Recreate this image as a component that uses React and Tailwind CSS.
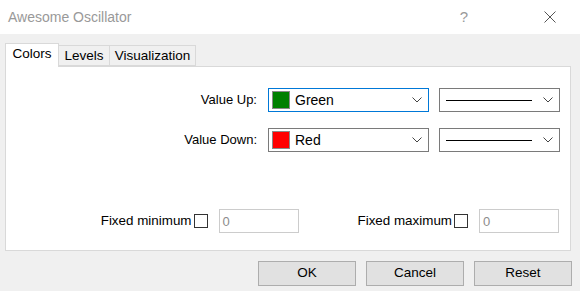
import React, { useState } from "react";

const Chevron = () => (
  <svg width="10" height="6" viewBox="0 0 10 6" className="shrink-0">
    <path d="M0.5 0.5 L5 5 L9.5 0.5" fill="none" stroke="#444" strokeWidth="1" />
  </svg>
);

const ColorSelect = ({ color, label, focused }) => (
  <div
    className={`flex items-center w-[161px] h-[24px] bg-white border pl-[3px] pr-[6px] ${
      focused ? "border-[#0078d7]" : "border-[#7a7a7a]"
    }`}
  >
    <div className="w-[18px] h-[18px] border border-[#8a8a8a]" style={{ background: color }} />
    <span className="ml-[5px] flex-1 text-[14px] text-black">{label}</span>
    <Chevron />
  </div>
);

const LineSelect = () => (
  <div className="flex items-center w-[121px] h-[24px] bg-white border border-[#7a7a7a] pl-[6px] pr-[6px]">
    <div className="w-[86px] h-px bg-black" />
    <div className="flex-1" />
    <Chevron />
  </div>
);

const FixedField = ({ label }) => {
  const [checked, setChecked] = useState(false);
  return (
    <div className="flex items-center">
      <span className="text-black text-[13.4px]">{label}</span>
      <button
        onClick={() => setChecked(!checked)}
        className="ml-[2px] w-[14px] h-[14px] border border-[#333] bg-white"
      />
      <div className="ml-[11px] w-[80px] h-[24px] border border-[#cccccc] bg-white pl-[3px] flex items-start pt-[2px] text-[#8c8c8c]">
        0
      </div>
    </div>
  );
};

const App = () => {
  const [tab, setTab] = useState("Colors");
  const tabs = ["Colors", "Levels", "Visualization"];

  return (
    <div
      className="w-[580px] h-[291px] bg-[#f0f0f0] text-[13px] overflow-hidden flex flex-col"
      style={{ fontFamily: '"Liberation Sans", Arial, sans-serif' }}
    >
      {/* title bar */}
      <div className="h-[34px] bg-white flex items-center pl-[8px] shrink-0">
        <span className="text-[14px] text-[#999999] flex-1">Awesome Oscillator</span>
        <span className="text-[15px] text-[#999999] mr-[76px]">?</span>
        <svg width="12" height="12" viewBox="0 0 12 12" className="mr-[24px]">
          <path d="M0.5 0.5 L11.5 11.5 M11.5 0.5 L0.5 11.5" stroke="#555" strokeWidth="1" />
        </svg>
      </div>

      {/* tabs */}
      <div className="flex items-end mt-[9px] ml-[5px] h-[24px] relative z-10 -mb-px">
        {tabs.map((t) =>
          t === tab ? (
            <button
              key={t}
              onClick={() => setTab(t)}
              className="h-[24px] w-[54px] bg-white border border-b-0 border-[#d9d9d9] text-black text-[13.5px] pb-[3px]"
            >
              {t}
            </button>
          ) : (
            <button
              key={t}
              onClick={() => setTab(t)}
              className={`h-[21px] mb-px ${t === "Levels" ? "w-[51px]" : "w-[86px]"} bg-[#f0f0f0] border border-l-0 border-[#d9d9d9] text-black text-[13.5px] leading-[19px]`}
            >
              {t}
            </button>
          )
        )}
      </div>

      {/* panel */}
      <div className="ml-[5px] w-[566px] h-[185px] bg-white border border-[#d9d9d9] flex flex-col pt-[21px] pb-[17px] shrink-0">
        <div className="flex items-center justify-end pr-[10px]">
          <span className="text-black mr-[11px]">Value Up:</span>
          <ColorSelect color="#008000" label="Green" focused />
          <div className="w-[10px]" />
          <LineSelect />
        </div>
        <div className="flex items-center justify-end pr-[10px] mt-[16px]">
          <span className="text-black mr-[11px]">Value Down:</span>
          <ColorSelect color="#ff0000" label="Red" />
          <div className="w-[10px]" />
          <LineSelect />
        </div>
        <div className="mt-auto flex items-center justify-end pr-[11px] gap-[59px]">
          <FixedField label="Fixed minimum" />
          <FixedField label="Fixed maximum" />
        </div>
      </div>

      {/* buttons */}
      <div className="flex justify-end gap-[10px] pr-[8px] mt-[10px]">
        {["OK", "Cancel", "Reset"].map((b) => (
          <button
            key={b}
            className="w-[98px] h-[25px] bg-[#e1e1e1] border border-[#adadad] text-black text-[13.5px]"
          >
            {b}
          </button>
        ))}
      </div>
    </div>
  );
};

export default App;
